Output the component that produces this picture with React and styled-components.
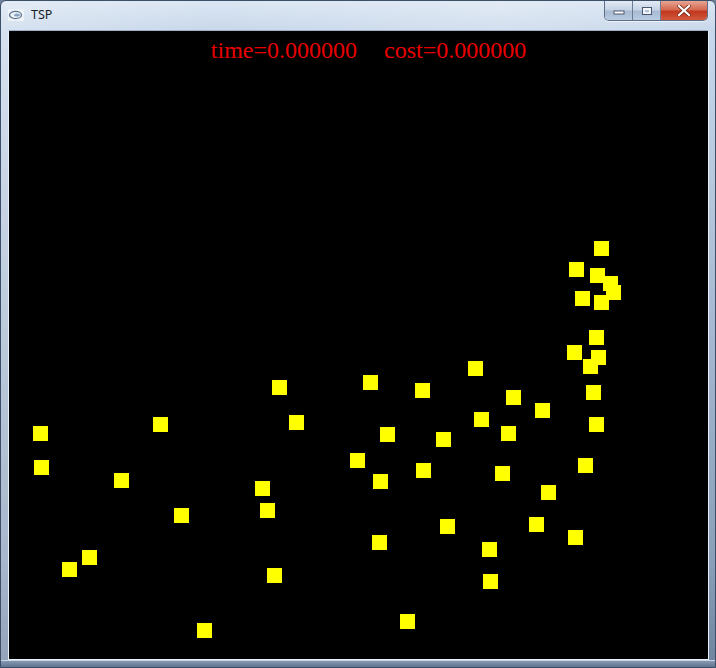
import React from 'react'
import styled, { createGlobalStyle } from 'styled-components'

const GlobalStyle = createGlobalStyle`
  html, body { margin:0; padding:0; background:#6d8199; }
  body { font-family:"Liberation Sans", Arial, sans-serif; }
`

const cities = [
  [601,248],[576,269],[597,275],[610,283],[613,292],[582,298],[601,302],
  [596,337],[574,352],[598,357],[590,366],[475,368],[370,382],[279,387],
  [422,390],[593,392],[513,397],[542,410],[481,419],[296,422],[160,424],
  [596,424],[40,433],[387,434],[508,433],[443,439],[357,460],[41,467],
  [585,465],[423,470],[502,473],[121,480],[380,481],[262,488],[548,492],
  [267,510],[181,515],[447,526],[536,524],[575,537],[379,542],[489,549],
  [89,557],[69,569],[274,575],[490,581],[407,621],[204,630],
]

const Frame = styled.div`
  width:716px;
  height:668px;
  box-sizing:border-box;
  display:flex;
  flex-direction:column;
  border:1px solid #3c4f68;
  border-radius:6px 6px 0 0;
  background:
    linear-gradient(90deg, rgba(255,255,255,0.25), rgba(255,255,255,0) 30%, rgba(255,255,255,0.2) 70%, rgba(255,255,255,0)),
    linear-gradient(180deg, #dbe6f3 0px, #c8d7ea 30px, #aabcd3 300px, #8b9fba 560px, #6f839f 668px);
  overflow:hidden;
`

const TitleBar = styled.div`
  height:29px;
  display:flex;
  align-items:flex-start;
  justify-content:space-between;
  padding-left:7px;
`

const Caption = styled.div`
  display:flex;
  align-items:center;
  gap:7px;
  height:27px;
  font-family:"Noto Sans", "Liberation Sans", sans-serif;
  font-size:12.5px;
  color:#141c26;
`

const Controls = styled.div`
  display:flex;
  margin-right:7px;
  border:1px solid #5d6f88;
  border-top:none;
  border-radius:0 0 5px 5px;
  overflow:hidden;
  box-shadow:0 1px 0 rgba(255,255,255,0.6);
`

const CtrlButton = styled.div`
  width:${p => p.wide ? 46 : 27}px;
  height:19px;
  display:flex;
  align-items:center;
  justify-content:center;
  border-left:${p => p.first ? 'none' : '1px solid #6b7d95'};
  background:${p => p.close
    ? 'linear-gradient(180deg, #e8a593 0%, #d56a52 45%, #c1391f 55%, #d2583c 100%)'
    : 'linear-gradient(180deg, #e3ebf5 0%, #c6d4e6 45%, #a9bbd2 55%, #b9cbe0 100%)'};
`

const Canvas = styled.div`
  position:relative;
  flex:1;
  margin:0 6px 0 7px;
  background:#000;
  border:1px solid #e6eef7;
  border-top-color:#9fb1c8;
  overflow:hidden;
`

const Status = styled.div`
  display:flex;
  justify-content:center;
  gap:27px;
  padding-top:5px;
  padding-left:20px;
  font-family:"Liberation Serif", "Times New Roman", serif;
  font-size:24px;
  line-height:28px;
  color:#e80000;
`

const City = styled.div`
  position:absolute;
  width:15px;
  height:15px;
  background:#ffff00;
`

const BottomEdge = styled.div`
  height:6px;
  background:linear-gradient(180deg, #8799b2, #5f7390);
  border-top:1px solid #c9d6e6;
`

const AppIcon = () => (
  <svg width="16" height="12" viewBox="0 0 16 12">
    <rect x="0" y="0" width="16" height="12" rx="1" fill="#eef3f8" />
    <ellipse cx="7.5" cy="6" rx="6" ry="3.6" fill="none" stroke="#5b7390" strokeWidth="1.3" />
    <ellipse cx="9" cy="6" rx="3" ry="1.6" fill="#8aa3c0" />
  </svg>
)

const App = () => (
  <>
    <GlobalStyle />
    <Frame>
      <TitleBar>
        <Caption>
          <AppIcon />
          <span>TSP</span>
        </Caption>
        <Controls>
          <CtrlButton first>
            <svg width="12" height="8" viewBox="0 0 12 8">
              <rect x="1" y="4" width="10" height="3" fill="#fff" stroke="#4a5a70" strokeWidth="1" />
            </svg>
          </CtrlButton>
          <CtrlButton>
            <svg width="12" height="10" viewBox="0 0 12 10">
              <rect x="1.5" y="1.5" width="9" height="7" fill="none" stroke="#4a5a70" strokeWidth="1" />
              <rect x="3" y="3" width="6" height="4" fill="none" stroke="#fff" strokeWidth="1.6" />
            </svg>
          </CtrlButton>
          <CtrlButton wide close>
            <svg width="14" height="11" viewBox="0 0 14 11">
              <path d="M2 1 L12 10 M12 1 L2 10" stroke="#6a1d10" strokeWidth="3.6" strokeLinecap="square" />
              <path d="M2 1 L12 10 M12 1 L2 10" stroke="#fff" strokeWidth="2.2" strokeLinecap="square" />
            </svg>
          </CtrlButton>
        </Controls>
      </TitleBar>
      <Canvas>
        <Status>
          <span>time=0.000000</span>
          <span>cost=0.000000</span>
        </Status>
        {cities.map(([x, y], i) => (
          <City key={i} style={{ left: x - 16, top: y - 38 }} />
        ))}
      </Canvas>
      <BottomEdge />
    </Frame>
  </>
)

export default App
